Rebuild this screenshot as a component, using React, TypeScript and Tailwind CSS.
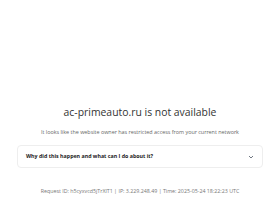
import React from 'react';

export default function App() {
    return (
        <div className="w-[280px] h-[210px] bg-white flex flex-col items-center font-['Open_Sans',sans-serif] overflow-hidden">
            <div className="h-[105px]" />
            <h1 className="text-[10.4px] leading-[14px] font-medium text-[#333]">
                ac-primeauto.ru is not available
            </h1>
            <p className="mt-[9px] text-[5.4px] leading-[8px] text-[#666]">
                It looks like the website owner has restricted access from your current network
            </p>
            <div className="mt-[9px] w-[246px] h-[23px] rounded-[4px] border border-[#eee] flex items-center justify-between pl-[8px] pr-[8px]">
                <span className="text-[5.3px] font-bold text-[#222]">Why did this happen and what can I do about it?</span>
                <svg width="6" height="4" viewBox="0 0 6 4" fill="none">
                    <path d="M1 1l2 2 2-2" stroke="#4b5563" strokeWidth="0.8" />
                </svg>
            </div>
            <p className="mt-[19px] text-[5.3px] leading-[8px] text-[#777]">
                Request ID: h5cyxvcd5jTrXlT1 | IP: 3.229.248.49 | Time: 2025-05-24 18:22:23 UTC
            </p>
        </div>
    );
}
